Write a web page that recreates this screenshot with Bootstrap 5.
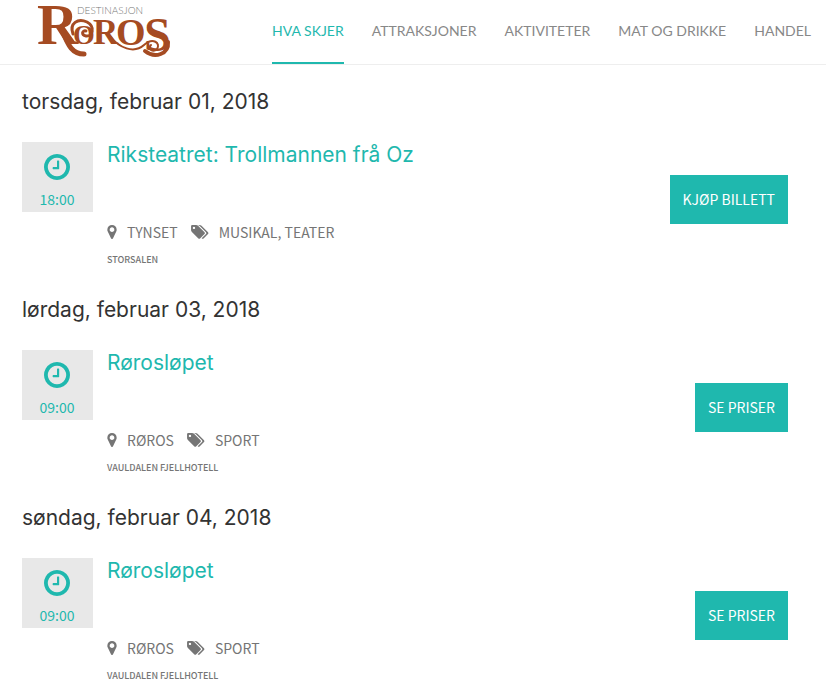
<!DOCTYPE html>
<html lang="no">
<head>
<meta charset="utf-8">
<meta name="viewport" content="width=device-width, initial-scale=1">
<title>Destinasjon Røros – Hva skjer</title>
<link href="https://cdn.jsdelivr.net/npm/bootstrap@5.3.0/dist/css/bootstrap.min.css" rel="stylesheet">
<style>
:root { --teal: #1fb8ae; --grey: #757575; }
body { font-family: "Noto Sans CJK SC", "Noto Sans", sans-serif; color: var(--grey); background: #fff; }
.site-nav { border-bottom: 1px solid #eee; height: 65px; padding: 0 15px 0 36px; }
.brand-logo { width: 135px; height: 58px; overflow: visible; }
.menu { gap: 28px; font: 14px/20px Lato, sans-serif; }
.menu a { color: #888; text-decoration: none; white-space: nowrap; padding: 21px 0; border-bottom: 2px solid transparent; }
.menu a.active { color: var(--teal); border-color: var(--teal); }
.listing { padding: 0 38px 0 22px; }
.event-day { height: 208px; }
.day-title, .event-title { font: 21px/26px Inter, sans-serif; margin: 0; }
.day-title { color: #333; padding: 24px 0 27px; }
.event-title a { color: var(--teal); text-decoration: none; }
.time-box { width: 71px; height: 70px; background: #e8e8e8; color: var(--teal); font-size: 14px; line-height: 20px; padding: 12px 1px 0 0; margin-right: 14px; }
.time-box svg { width: 26px; height: 26px; margin-bottom: 9px; }
.meta-line { font-size: 14px; line-height: 20px; margin-top: 54px; }
.pin-icon { width: 10px; height: 14px; margin-right: 10px; }
.tags-icon { width: 18px; height: 14px; margin: 0 10px 0 13px; }
.venue { font-size: 9px; line-height: 14px; font-weight: 500; margin-top: 11px; }
.btn-ticket { background: var(--teal); color: #fff; border: 0; border-radius: 0; font-size: 14px; line-height: 21px; padding: 14px 13px; margin-top: 33px; }
.btn-ticket:hover { background: #199a92; color: #fff; }
</style>
<script src="https://cdn.jsdelivr.net/npm/bootstrap@5.3.0/dist/js/bootstrap.bundle.min.js"></script>
</head>
<body>
<svg class="d-none" aria-hidden="true">
  <symbol id="clock" viewBox="128 128 1536 1536"><path fill="currentColor" d="M1024 544v448q0 14-9 23t-23 9h-320q-14 0-23-9t-9-23v-64q0-14 9-23t23-9h224v-352q0-14 9-23t23-9h64q14 0 23 9t9 23zm416 352q0-148-73-273t-198-198-273-73-273 73-198 198-73 273 73 273 198 198 273 73 273-73 198-198 73-273zm224 0q0 209-103 385.5t-279.5 279.5-385.5 103-385.5-103-279.5-279.5-103-385.5 103-385.5 279.5-279.5 385.5-103 385.5 103 279.5 279.5 103 385.5z"/></symbol>
  <symbol id="pin" viewBox="384 128 1024 1536"><path fill="currentColor" d="M1152 640q0-106-75-181t-181-75-181 75-75 181 75 181 181 75 181-75 75-181zm256 0q0 109-33 179l-364 774q-16 33-47.5 52t-67.5 19-67.5-19-46.5-52l-365-774q-33-70-33-179 0-212 150-362t362-150 362 150 150 362z"/></symbol>
  <symbol id="tags" viewBox="0 128 1835 1536"><path fill="currentColor" d="M384 448q0-53-37.500-90.500t-90.500-37.500-90.500 37.500-37.500 90.500 37.500 90.500 90.500 37.500 90.500-37.500 37.500-90.500zm1067 576q0 53-37 90l-491 492q-39 37-91 37-53 0-90-37l-715-716q-38-37-64.500-101t-26.500-117v-416q0-52 38-90t90-38h416q53 0 117 26.500t102 64.500l715 714q37 39 37 91zm384 0q0 53-37 90l-491 492q-39 37-91 37-36 0-59-14t-53-45l470-470q37-37 37-90 0-52-37-91l-715-714q-38-38-102-64.500t-117-26.500h224q53 0 117 26.500t102 64.500l715 714q37 39 37 91z"/></symbol>
</svg>

<header class="site-nav d-flex align-items-start justify-content-between">
  <a href="#" aria-label="Destinasjon Røros">
    <svg class="brand-logo d-block" viewBox="36 0 135 58">
      <g fill="#a54b22" font-family="Liberation Serif, serif" font-weight="bold">
        <text x="37" y="44" font-size="57">R</text>
        <text x="73" y="44" font-size="28">O</text>
        <text x="93" y="44" font-size="35">R</text>
        <text x="116" y="45" font-size="38">O</text>
        <text x="144" y="51" font-size="48">S</text>
      </g>
      <g fill="none" stroke="#a54b22" stroke-linecap="round">
        <path d="M62 30C67 41 70 54 84 54" stroke-width="5"/>
        <path d="M73 34C69 23 78 18 87 22C96 27 92 37 86 36C81 35 82 30 86 31" stroke-width="3"/>
        <path d="M110 36C119 48 134 54 144 45C153 37 161 43 157 49C153 53 147 49 151 45" stroke-width="2"/>
        <path d="M168 42C169 54 155 59 145 51" stroke-width="4"/>
      </g>
      <text x="77" y="14" font-family="Lato, sans-serif" font-weight="300" font-size="10" fill="#777">DESTINASJON</text>
    </svg>
  </a>
  <nav class="menu d-flex" aria-label="Hovedmeny">
    <a href="#" class="active" aria-current="page">HVA SKJER</a>
    <a href="#">ATTRAKSJONER</a>
    <a href="#">AKTIVITETER</a>
    <a href="#">MAT OG DRIKKE</a>
    <a href="#">HANDEL</a>
  </nav>
</header>

<main class="listing">
  <section class="event-day">
    <h2 class="day-title">torsdag, februar 01, 2018</h2>
    <article class="d-flex align-items-start">
      <div class="time-box d-flex flex-column align-items-center flex-shrink-0"><svg aria-hidden="true"><use href="#clock"/></svg><time>18:00</time></div>
      <div class="flex-grow-1">
        <h3 class="event-title"><a href="#">Riksteatret: Trollmannen frå Oz</a></h3>
        <div class="meta-line d-flex align-items-center"><svg class="pin-icon" aria-hidden="true"><use href="#pin"/></svg><span>TYNSET</span><svg class="tags-icon" aria-hidden="true"><use href="#tags"/></svg><span>MUSIKAL, TEATER</span></div>
        <div class="venue">STORSALEN</div>
      </div>
      <button type="button" class="btn btn-ticket flex-shrink-0">KJØP BILLETT</button>
    </article>
  </section>
  <section class="event-day">
    <h2 class="day-title">lørdag, februar 03, 2018</h2>
    <article class="d-flex align-items-start">
      <div class="time-box d-flex flex-column align-items-center flex-shrink-0"><svg aria-hidden="true"><use href="#clock"/></svg><time>09:00</time></div>
      <div class="flex-grow-1">
        <h3 class="event-title"><a href="#">Rørosløpet</a></h3>
        <div class="meta-line d-flex align-items-center"><svg class="pin-icon" aria-hidden="true"><use href="#pin"/></svg><span>RØROS</span><svg class="tags-icon" aria-hidden="true"><use href="#tags"/></svg><span>SPORT</span></div>
        <div class="venue">VAULDALEN FJELLHOTELL</div>
      </div>
      <button type="button" class="btn btn-ticket flex-shrink-0">SE PRISER</button>
    </article>
  </section>
  <section class="event-day">
    <h2 class="day-title">søndag, februar 04, 2018</h2>
    <article class="d-flex align-items-start">
      <div class="time-box d-flex flex-column align-items-center flex-shrink-0"><svg aria-hidden="true"><use href="#clock"/></svg><time>09:00</time></div>
      <div class="flex-grow-1">
        <h3 class="event-title"><a href="#">Rørosløpet</a></h3>
        <div class="meta-line d-flex align-items-center"><svg class="pin-icon" aria-hidden="true"><use href="#pin"/></svg><span>RØROS</span><svg class="tags-icon" aria-hidden="true"><use href="#tags"/></svg><span>SPORT</span></div>
        <div class="venue">VAULDALEN FJELLHOTELL</div>
      </div>
      <button type="button" class="btn btn-ticket flex-shrink-0">SE PRISER</button>
    </article>
  </section>
</main>
</body>
</html>
